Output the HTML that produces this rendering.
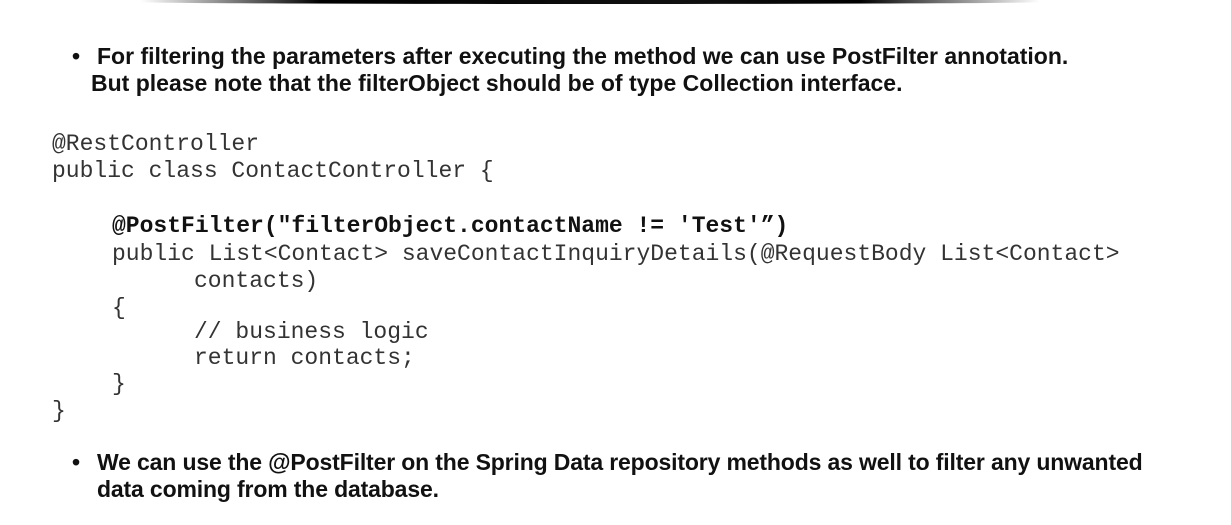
<!DOCTYPE html>
<html><head><meta charset="utf-8"><style>
html,body{margin:0;padding:0;background:#fff;width:1231px;height:525px;overflow:hidden;position:relative}
.b{position:absolute;font-family:"Liberation Sans",sans-serif;font-weight:bold;font-size:23px;line-height:27px;color:#111;white-space:pre;letter-spacing:0px}
.b2{letter-spacing:-0.15px}
.c{position:absolute;font-family:"Liberation Mono",monospace;font-size:23px;line-height:27px;color:#333;white-space:pre}
.bold{font-weight:bold;color:#111}
.top{position:absolute;left:140px;top:0;width:900px;height:4px;background:linear-gradient(90deg,rgba(0,0,0,0),#000 20%,#111 60%,#000 80%,rgba(0,0,0,0));border-radius:0 0 50% 50%}
</style></head><body>
<div class="top"></div>
<div class="b" style="left:72px;top:43px">•</div>
<div class="b" style="left:97px;top:43px">For filtering the parameters after executing the method we can use PostFilter annotation.</div>
<div class="b" style="left:91px;top:70px">But please note that the filterObject should be of type Collection interface.</div>

<div class="c" style="left:52px;top:131px">@RestController</div>
<div class="c" style="left:52px;top:158px">public class ContactController {</div>
<div class="c bold" style="left:112px;top:213px">@PostFilter("filterObject.contactName != 'Test'”)</div>
<div class="c" style="left:112px;top:241px">public List&lt;Contact&gt; saveContactInquiryDetails(@RequestBody List&lt;Contact&gt;</div>
<div class="c" style="left:194px;top:268px">contacts)</div>
<div class="c" style="left:112px;top:295px">{</div>
<div class="c" style="left:194px;top:319px">// business logic</div>
<div class="c" style="left:194px;top:345px">return contacts;</div>
<div class="c" style="left:112px;top:371px">}</div>
<div class="c" style="left:52px;top:398px">}</div>

<div class="b" style="left:72px;top:449px">•</div>
<div class="b b2" style="left:97px;top:449px">We can use the @PostFilter on the Spring Data repository methods as well to filter any unwanted</div>
<div class="b b2" style="left:97px;top:476px">data coming from the database.</div>
</body></html>
